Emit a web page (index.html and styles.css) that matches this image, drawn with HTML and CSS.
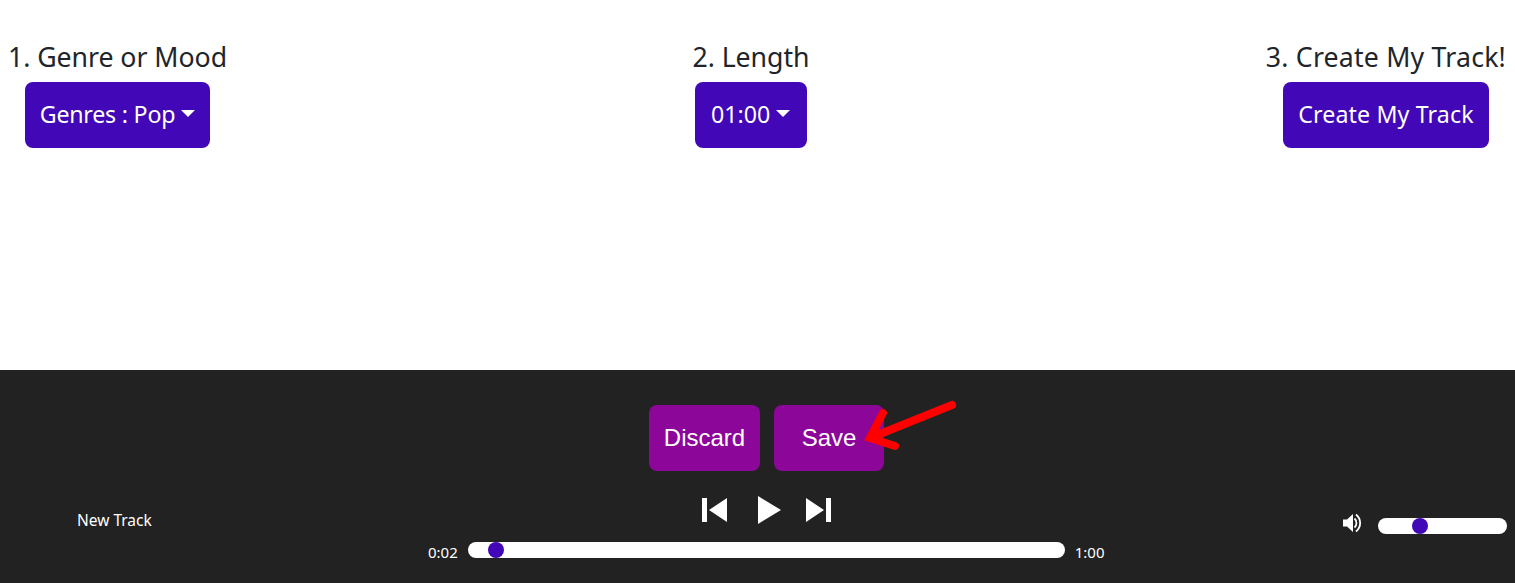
FILE: index.html
```html
<!DOCTYPE html>
<html lang="en">
<head>
<meta charset="utf-8">
<title>Create My Track</title>
<link rel="stylesheet" href="styles.css">
</head>
<body>
<main class="steps">
  <section class="step">
    <h2 class="step-title">1. Genre or Mood</h2>
    <button class="btn btn-primary btn-genre">Genres : Pop<span class="caret"></span></button>
  </section>
  <section class="step step-mid">
    <h2 class="step-title">2. Length</h2>
    <button class="btn btn-primary btn-length">01:00<span class="caret"></span></button>
  </section>
  <section class="step">
    <h2 class="step-title step-title-wide">3. Create My Track!</h2>
    <button class="btn btn-primary btn-create">Create My Track</button>
  </section>
</main>
<footer class="player">
  <div class="actions">
    <button class="btn btn-save btn-discard">Discard</button>
    <button class="btn btn-save btn-wide">Save</button>
    <svg class="arrow" width="110" height="60" viewBox="0 0 110 60" aria-hidden="true">
      <path d="M91 5 L9 38 M22 13 L9 38 L34 46" fill="none" stroke="#ff0000" stroke-width="8" stroke-linecap="round" stroke-linejoin="miter"/>
    </svg>
  </div>
  <div class="deck">
    <div class="track-name">New Track</div>
    <div class="transport">
      <div class="controls">
        <svg width="26" height="26" viewBox="0 0 26 26" aria-hidden="true"><path d="M0 1h5v24H0zM25 1v24L7 13z" fill="#fff"/></svg>
        <svg class="ctl-play" width="24" height="28" viewBox="0 0 24 28" aria-hidden="true"><path d="M0 0l23 14L0 28z" fill="#fff"/></svg>
        <svg width="26" height="26" viewBox="0 0 26 26" aria-hidden="true"><path d="M20 1h5v24h-5zM0 1v24l18-12z" fill="#fff"/></svg>
      </div>
      <div class="progress">
        <span class="time">0:02</span>
        <div class="slider slider-long"><span class="thumb thumb-time"></span></div>
        <span class="time">1:00</span>
      </div>
    </div>
    <div class="volume">
      <svg class="vol-icon" width="22" height="20" viewBox="0 0 22 20" aria-hidden="true">
        <path d="M1 6.500h4L11 1v18l-6-5.500H1z" fill="#fff"/>
        <path d="M12.500 5.500c2.600 2.500 2.600 6.500 0 9" fill="none" stroke="#fff" stroke-width="1.800"/>
        <path d="M14 1.500c5.500 4.500 5.500 12.500 0 17" fill="none" stroke="#fff" stroke-width="1.800"/>
      </svg>
      <div class="slider slider-short"><span class="thumb thumb-vol"></span></div>
    </div>
  </div>
</footer>
</body>
</html>
```
FILE: styles.css
```css
* { box-sizing: border-box; }
html, body { height: 100%; }
body {
  margin: 0;
  background: #fff;
  color: #212529;
  font-family: "Noto Sans", "Open Sans", sans-serif;
  display: flex;
  flex-direction: column;
  overflow: hidden;
}
.steps {
  height: 370px;
  padding: 38px 9px 0 8px;
  display: flex;
  justify-content: space-between;
  align-items: flex-start;
}
.step { display: flex; flex-direction: column; align-items: center; }
.step-mid { margin-left: 9px; }
.step-title {
  margin: 0 0 6px;
  font-size: 26.700px;
  font-weight: 400;
  line-height: 38px;
  white-space: nowrap;
  letter-spacing: -0.05px;
}
.step-title-wide { letter-spacing: 0.2px; }
.btn {
  border: 0;
  border-radius: 8px;
  color: #fff;
  height: 66px;
  padding: 0 15px;
  font-size: 23.200px;
  font-family: inherit;
  display: inline-flex;
  align-items: center;
  white-space: nowrap;
}
.btn-primary { background: #4207b6; line-height: 34px; padding-bottom: 2px; }
.btn-genre { letter-spacing: -0.22px; }
.btn-length { padding-left: 16px; padding-right: 16.500px; }
.btn-create { letter-spacing: 0.13px; }
.caret {
  margin-left: 6px;
  margin-bottom: 1px;
  border-top: 7px solid #fff;
  border-left: 7px solid transparent;
  border-right: 7px solid transparent;
}
.player {
  flex: 1;
  background: #222;
  color: #fff;
  padding-top: 35px;
  display: flex;
  flex-direction: column;
}
.actions {
  position: relative;
  align-self: center;
  display: flex;
  gap: 14px;
  margin-left: 18px;
}
.btn-save {
  background: #8c0699;
  font-family: "Liberation Sans", Arial, sans-serif;
  font-size: 24px;
  justify-content: center;
  padding: 0;
}
.btn-discard { width: 111px; }
.btn-wide { width: 110px; }
.arrow { position: absolute; left: 212px; top: -5px; }
.deck {
  display: grid;
  grid-template-columns: 428px 678px 1fr;
  margin-top: 25px;
}
.track-name {
  padding: 12px 0 0 77px;
  font-size: 15.500px;
  line-height: 24px;
}
.transport { display: flex; flex-direction: column; }
.controls {
  display: flex;
  align-items: center;
  height: 28px;
  gap: 24px;
  padding-left: 274px;
}
.ctl-play { margin-left: 6px; }
.progress {
  display: flex;
  align-items: center;
  gap: 10px;
  margin-top: 16px;
  height: 24px;
}
.time { font-size: 15px; line-height: 24px; }
.slider {
  position: relative;
  height: 16px;
  border-radius: 8px;
  background: #fff;
}
.slider-long { width: 597px; margin-top: -4px; }
.slider-short { width: 129px; margin-top: 9px; }
.thumb {
  position: absolute;
  top: 0;
  width: 16px;
  height: 16px;
  border-radius: 50%;
  background: #4207b6;
}
.thumb-time { left: 20px; }
.thumb-vol { left: 34px; }
.volume {
  display: flex;
  justify-content: flex-end;
  align-items: flex-start;
  gap: 14px;
  padding: 0 8px 0 0;
  margin-top: 13px;
}
.vol-icon { margin-top: 4px; }
```
